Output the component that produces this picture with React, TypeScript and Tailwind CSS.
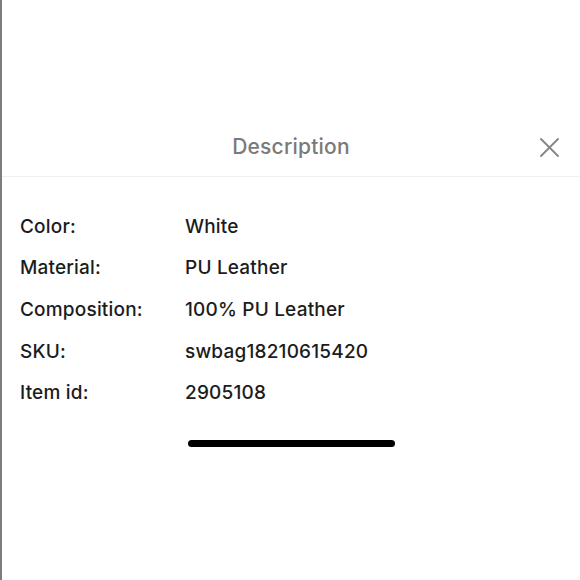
import React from "react";

const details = [
  { label: "Color:", value: "White" },
  { label: "Material:", value: "PU Leather" },
  { label: "Composition:", value: "100% PU Leather" },
  { label: "SKU:", value: "swbag18210615420" },
  { label: "Item id:", value: "2905108" },
];

export default function App() {
  return (
    <div
      className="w-[580px] h-[580px] bg-white border-l-2 border-[#7d7d7d] flex flex-col"
      style={{ fontFamily: "Inter, 'Liberation Sans', sans-serif" }}
    >
      <div className="h-[117px]" />

      {/* Header */}
      <div className="relative h-[60px] flex items-center justify-center border-b border-[#f0f0f0]">
        <h2 className="text-[21px] tracking-[0.01em] font-medium text-[#7a7a7a]">Description</h2>
        <button className="absolute right-[21px] top-[21px] w-[19px] h-[19px] flex items-center justify-center">
          <svg width="19" height="19" viewBox="0 0 19 19" fill="none">
            <path d="M1 1L18 18M18 1L1 18" stroke="#858585" strokeWidth="1.8" strokeLinecap="round" />
          </svg>
        </button>
      </div>

      {/* Details */}
      <div className="pt-[29px] flex flex-col">
        {details.map((row) => (
          <div key={row.label} className="h-[41.7px] flex items-center text-[19px] tracking-[0.01em] text-[#1c1c1c] font-medium">
            <span className="w-[183px] pl-[18px]">{row.label}</span>
            <span>{row.value}</span>
          </div>
        ))}
      </div>

      <div className="flex justify-center pt-[26px]">
        <div className="w-[207px] h-[7px] rounded-full bg-black" />
      </div>
    </div>
  );
}
